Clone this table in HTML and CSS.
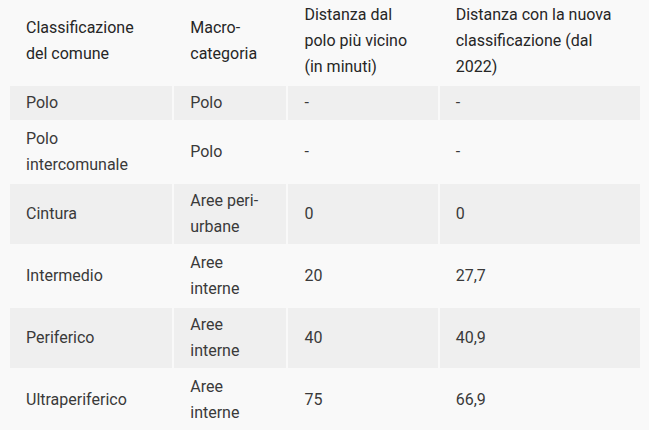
FILE: index.html
```html
<!DOCTYPE html>
<html lang="it">
<head>
<meta charset="utf-8">
<link rel="stylesheet" href="styles.css">
</head>
<body>
<div class="wrap">
<table class="data">
<colgroup>
<col class="c1"><col class="c2"><col class="c3"><col class="c4">
</colgroup>
<thead>
<tr><th>Classificazione del comune</th><th>Macro-categoria</th><th>Distanza dal polo più vicino (in minuti)</th><th>Distanza con la nuova classificazione (dal 2022)</th></tr>
</thead>
<tbody>
<tr><td>Polo</td><td>Polo</td><td>-</td><td>-</td></tr>
<tr><td>Polo intercomunale</td><td>Polo</td><td>-</td><td>-</td></tr>
<tr><td>Cintura</td><td>Aree peri-urbane</td><td>0</td><td>0</td></tr>
<tr><td>Intermedio</td><td>Aree interne</td><td>20</td><td>27,7</td></tr>
<tr><td>Periferico</td><td>Aree interne</td><td>40</td><td>40,9</td></tr>
<tr><td>Ultraperiferico</td><td>Aree interne</td><td>75</td><td>66,9</td></tr>
</tbody>
</table>
</div>
</body>
</html>
```
FILE: styles.css
```css
html, body {
  margin: 0;
  background: #f9f9f9;
}
body {
  font-family: Roboto, "Liberation Sans", sans-serif;
  font-size: 16px;
  color: #3a3a3a;
}
.wrap {
  padding: 0 7px 0 8px;
  margin-top: -4px;
}
.data {
  width: 100%;
  table-layout: fixed;
  border-collapse: separate;
  border-spacing: 2px;
}
.c1 { width: 162px; }
.c2 { width: 112px; }
.c3 { width: 149px; }
.c4 { width: 200px; }
.data th, .data td {
  text-align: left;
  vertical-align: middle;
  padding: 4px 16px;
  line-height: 26px;
}
.data th {
  font-weight: normal;
  color: #262626;
}
.data tbody tr:nth-child(odd) td {
  background: #efefef;
}
```
